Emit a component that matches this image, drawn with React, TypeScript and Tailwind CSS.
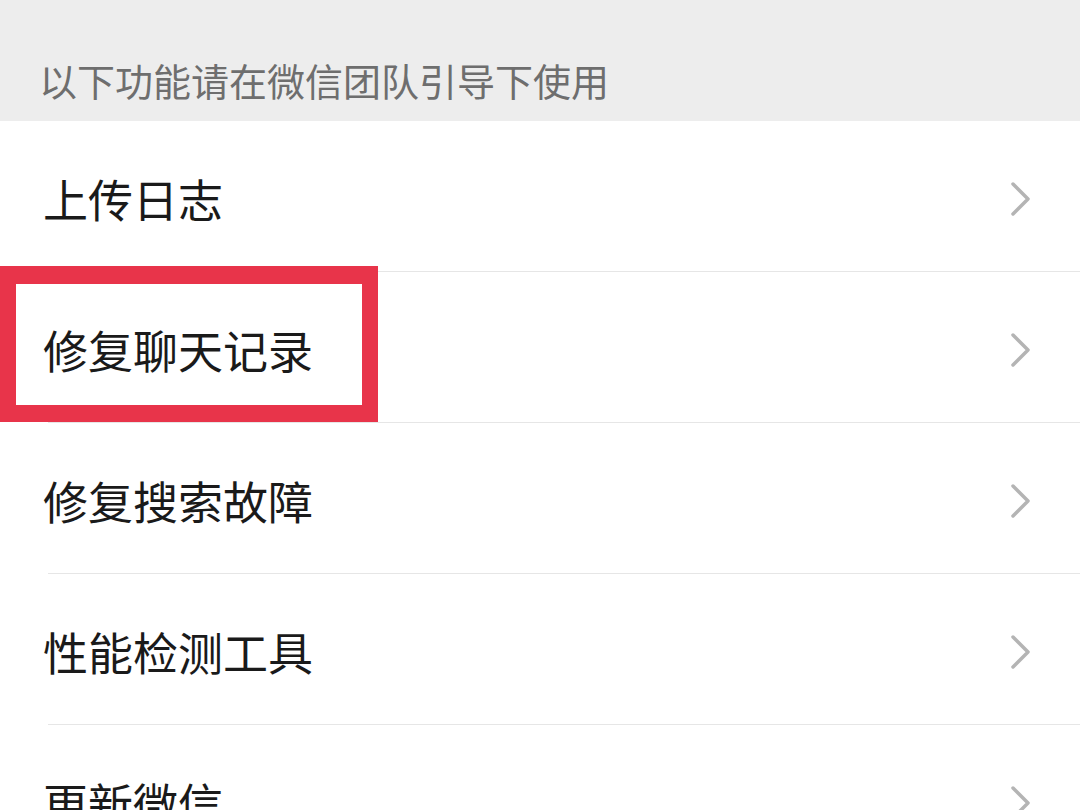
const items = ["上传日志", "修复聊天记录", "修复搜索故障", "性能检测工具", "更新微信"];

function Chevron() {
  return (
    <svg width="20" height="34" viewBox="0 0 20 34" fill="none">
      <polyline points="2,2 17,17 2,32" stroke="#b4b4b4" strokeWidth="3.5" strokeLinecap="round" strokeLinejoin="round" />
    </svg>
  );
}

export default function App() {
  return (
    <div
      className="relative w-[1080px] h-[810px] overflow-hidden bg-white"
      style={{ fontFamily: '"Noto Sans CJK SC", "Noto Sans", sans-serif' }}
    >
      <div className="h-[121px] bg-[#ededed] pl-[39px] pt-[61px]">
        <p className="text-[38px] leading-[38px] text-[#6e6e6e]">以下功能请在微信团队引导下使用</p>
      </div>
      <div className="flex flex-col">
        {items.map((item) => (
          <div key={item} className="ml-[48px] h-[151px] border-b border-[#e6e6e6] flex items-center justify-between pt-[5px] pr-[49px]">
            <span className="-ml-[5px] text-[45px] leading-[46px] text-[#1a1a1a]">{item}</span>
            <Chevron />
          </div>
        ))}
      </div>
      <div className="absolute left-0 top-[266px] w-[378px] h-[156px] border-[16px] border-t-[18px] border-b-[17px] border-[#e8344a]" />
    </div>
  );
}
